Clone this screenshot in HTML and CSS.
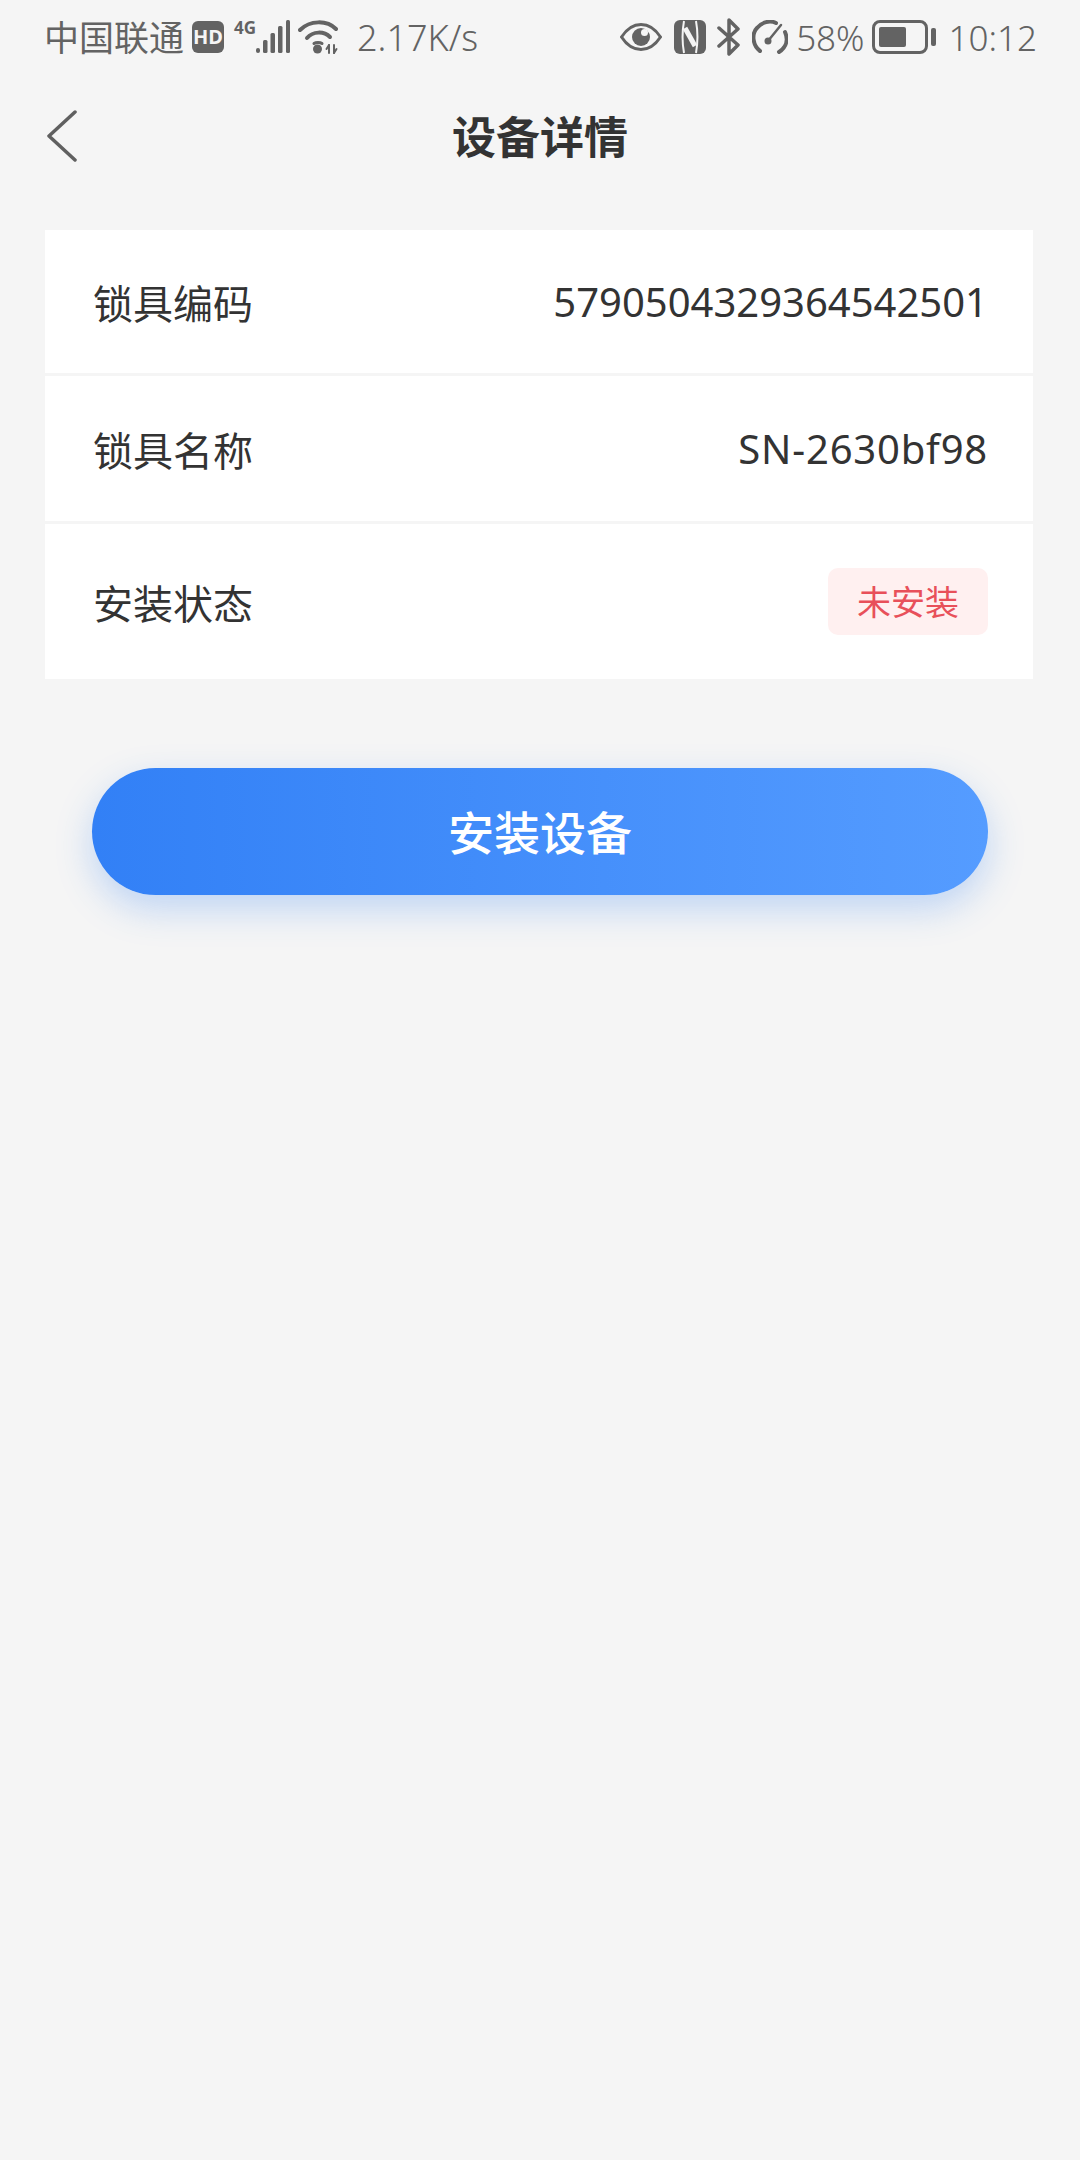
FILE: index.html
```html
<!DOCTYPE html>
<html lang="zh-CN">
<head>
  <meta charset="UTF-8" />
  <meta name="viewport" content="width=device-width, initial-scale=1" />
  <title>设备详情</title>
  <link rel="stylesheet" href="styles.css">
</head>
<body>
  <div class="status-bar">
    <div class="status-left">
      <span class="carrier">中国联通</span>
      <span class="hd">HD</span>
      <span class="net">
        <span class="net-label">4G</span>
        <svg class="signal" width="35" height="34" viewBox="0 0 35 34">
          <rect x="0" y="28" width="4" height="5" rx="2" />
          <rect x="7" y="20" width="4.500" height="13" rx="1.500" />
          <rect x="14.500" y="13" width="4.500" height="20" rx="1.500" />
          <rect x="22" y="6" width="4.500" height="27" rx="1.500" />
          <rect x="30" y="0" width="4" height="33" rx="1.500" />
        </svg>
      </span>
      <svg class="wifi" width="42" height="36" viewBox="0 0 42 36" fill="none" stroke="#636363" stroke-linecap="round">
        <path d="M2 11C12 1 29 1 38 10" stroke-width="4" />
        <path d="M9 19C15 12 26 12 32 18" stroke-width="4" />
        <circle cx="19.500" cy="30" r="4.500" fill="#636363" stroke="none" />
        <path d="M16 24.500C18 23 22 23 24 24.500" stroke-width="3" />
        <path d="M31 26V34M36 26V34" stroke-width="2" />
        <path d="M28.500 30L31 26M38.500 30L36 34" stroke-width="2" />
      </svg>
      <span class="speed">2.17K/s</span>
    </div>
    <div class="status-right">
      <svg class="eye" width="42" height="28" viewBox="0 0 42 28">
        <path d="M1.500 14C8 4 14 1.500 21 1.500S34 4 40.500 14C34 24 28 26.500 21 26.500S8 24 1.500 14Z" fill="none" stroke="#636363" stroke-width="3" />
        <circle cx="21" cy="14" r="9" fill="#636363" />
        <circle cx="24.500" cy="9.500" r="3.500" fill="#f5f5f5" />
      </svg>
      <svg class="nfc" width="32" height="34" viewBox="0 0 32 34">
        <rect width="32" height="34" rx="6" fill="#636363" />
        <path d="M10 1C8 12 8 22 10 33M22 1C24 12 24 22 22 33" fill="none" stroke="#f5f5f5" stroke-width="2" />
        <path d="M11 8L21 26" fill="none" stroke="#f5f5f5" stroke-width="5" />
      </svg>
      <svg class="bt" width="24" height="38" viewBox="0 0 24 38" fill="none" stroke="#636363" stroke-width="3.500" stroke-linejoin="round" stroke-linecap="round">
        <path d="M2 10L21 27L12 36V2L21 11L2 28" />
      </svg>
      <svg class="gauge" width="36" height="34" viewBox="0 0 36 34" fill="none" stroke="#636363" stroke-width="4" stroke-linecap="round">
        <path d="M8 31C1 26-1 14 5 8C10 2 18 0 24 3" />
        <path d="M33 12C36 19 35 27 27 32" />
        <path d="M16 21L29 5" stroke-width="2.500" />
        <circle cx="16" cy="21" r="3.500" fill="#636363" stroke="none" />
      </svg>
      <span class="percent">58%</span>
      <span class="battery">
        <span class="battery-body"><span class="battery-level"></span></span>
        <span class="battery-nub"></span>
      </span>
      <span class="time">10:12</span>
    </div>
  </div>

  <div class="nav">
    <svg class="back" width="30" height="52" viewBox="0 0 30 52" fill="none" stroke="#606060" stroke-width="3.500" stroke-linecap="round" stroke-linejoin="round">
      <path d="M28 2L2 26L28 50" />
    </svg>
    <h1>设备详情</h1>
  </div>

  <div class="card">
    <div class="row row-first">
      <span class="label">锁具编码</span>
      <span class="value">5790504329364542501</span>
    </div>
    <div class="row">
      <span class="label">锁具名称</span>
      <span class="value value-name">SN-2630bf98</span>
    </div>
    <div class="row row-last">
      <span class="label">安装状态</span>
      <span class="badge">未安装</span>
    </div>
  </div>

  <button class="install">安装设备</button>
</body>
</html>
```

FILE: styles.css
```css
* {
  box-sizing: border-box;
}
body {
  margin: 0;
  min-height: 2160px;
  background: #f5f5f5;
  color: #333;
  font-family: "Noto Sans", "Noto Sans CJK SC", sans-serif;
}
.status-bar {
  display: flex;
  justify-content: space-between;
  align-items: center;
  height: 74px;
  padding: 0 43px 0 44px;
  color: #636363;
}
.status-left,
.status-right {
  display: flex;
  align-items: center;
}
.carrier {
  padding-bottom: 4px;
  font-family: "Noto Sans CJK SC", sans-serif;
  font-size: 35px;
  font-weight: 400;
}
.hd {
  width: 32px;
  height: 32px;
  margin-left: 8px;
  border-radius: 6px;
  background: #636363;
  color: #f5f5f5;
  font-size: 20px;
  font-weight: 700;
  line-height: 32px;
  text-align: center;
}
.net {
  display: flex;
  align-items: flex-start;
  margin-left: 10px;
}
.net-label {
  margin-right: 0;
  font-size: 17px;
  font-weight: 700;
  line-height: 16px;
}
.signal {
  fill: #636363;
}
.wifi {
  margin-left: 7px;
}
.speed {
  margin-left: 17px;
  font-size: 36px;
  font-weight: 300;
}
.eye {
  margin-right: 1px;
}
.nfc {
  margin-left: 11px;
}
.bt {
  margin-left: 11px;
}
.gauge {
  margin-left: 11px;
}
.percent {
  margin-left: 8px;
  font-size: 35px;
  font-weight: 300;
}
.battery {
  display: flex;
  align-items: center;
  margin-left: 7px;
}
.battery-body {
  display: block;
  width: 56px;
  height: 34px;
  padding: 4px;
  border: 3px solid #636363;
  border-radius: 8px;
}
.battery-level {
  display: block;
  width: 27px;
  height: 100%;
  border-radius: 2px;
  background: #636363;
}
.battery-nub {
  width: 5px;
  height: 18px;
  margin-left: 3px;
  border-radius: 2px;
  background: #636363;
}
.time {
  margin-left: 13px;
  font-size: 35px;
  font-weight: 300;
}
.nav {
  position: relative;
  height: 128px;
  display: flex;
  align-items: center;
  justify-content: center;
}
.back {
  position: absolute;
  left: 47px;
  top: 36px;
}
h1 {
  margin: 0;
  padding-bottom: 6px;
  font-family: "Noto Sans CJK SC", sans-serif;
  font-size: 44px;
  font-weight: 700;
  color: #333;
}
.card {
  width: 988px;
  margin: 28px 0 0 45px;
  background: #fff;
}
.row {
  display: flex;
  justify-content: space-between;
  align-items: center;
  height: 148px;
  padding: 0 45px 0 48px;
  border-bottom: 3px solid #f5f5f5;
}
.row-first {
  height: 146px;
}
.row-last {
  height: 155px;
  border-bottom: none;
}
.label {
  font-family: "Noto Sans CJK SC", sans-serif;
  font-size: 40px;
  color: #333;
}
.value {
  font-size: 40px;
  color: #333;
}
.value-name {
  letter-spacing: 0.8px;
}
.badge {
  width: 160px;
  height: 67px;
  border-radius: 10px;
  background: #fff0f0;
  color: #e8505a;
  font-family: "Noto Sans CJK SC", sans-serif;
  font-size: 34px;
  line-height: 65px;
  text-align: center;
}
.install {
  display: block;
  width: 896px;
  height: 127px;
  margin: 89px 0 0 92px;
  padding-bottom: 5px;
  border: none;
  border-radius: 64px;
  background: linear-gradient(90deg, #3280f6, #559cff);
  box-shadow: 0 14px 36px rgba(50, 128, 246, 0.28);
  color: #fff;
  font-family: "Noto Sans CJK SC", sans-serif;
  font-size: 46px;
  font-weight: 500;
}
```
